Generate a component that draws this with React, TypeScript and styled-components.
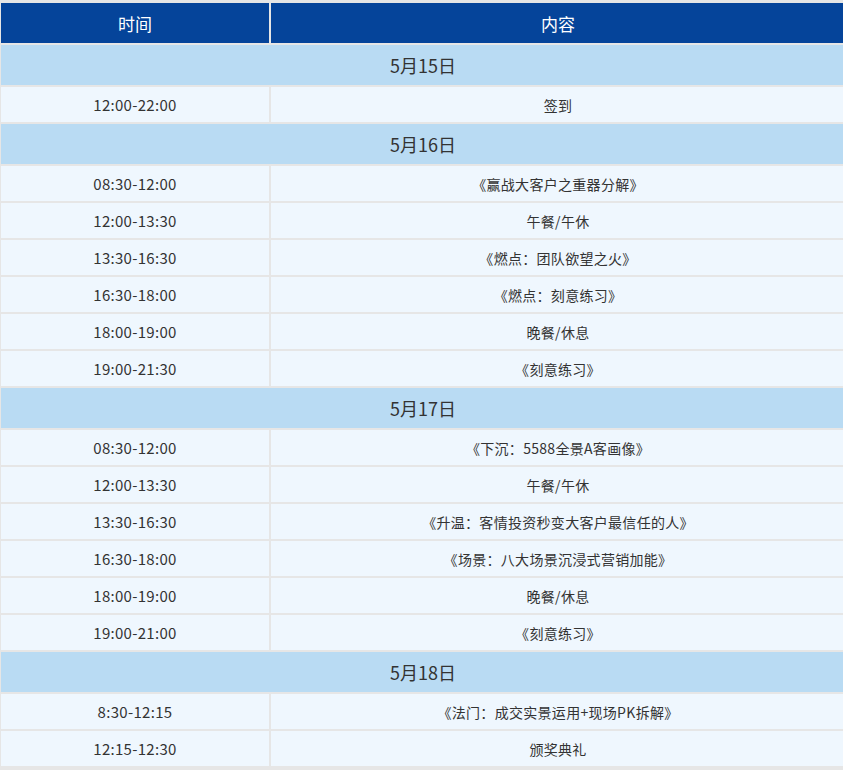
import React from "react";
import styled, { createGlobalStyle } from "styled-components";

const GlobalStyle = createGlobalStyle`
  html, body {
    margin: 0;
    padding: 0;
    background: #e6e6e6;
    overflow: hidden;
  }
  body {
    font-family: "Noto Sans CJK SC", "Noto Sans", sans-serif;
  }
`;

const Schedule = styled.table`
  width: 848px;
  margin: 1px 0 0 -1px;
  border-collapse: separate;
  border-spacing: 2px;
  background: #e6e6e6;
  table-layout: fixed;
`;

const HeadCell = styled.th<{ $w?: number }>`
  width: ${(p) => (p.$w ? `${p.$w}px` : "auto")};
  height: 40px;
  padding: 0;
  background: #05449a;
  color: #ffffff;
  font-size: 17px;
  font-weight: 400;
  text-align: center;
`;

const DateCell = styled.td`
  height: 40px;
  padding: 0;
  background: #b9dbf3;
  color: #333333;
  font-size: 18px;
  text-align: center;
`;

const Cell = styled.td<{ $time?: boolean }>`
  height: 35px;
  padding: 0;
  background: #eff7fe;
  color: #333333;
  font-size: ${(p) => (p.$time ? "15px" : "14px")};
  text-align: center;
  letter-spacing: 0.3px;
`;

const days = [
  {
    date: "5月15日",
    items: [["12:00-22:00", "签到"]],
  },
  {
    date: "5月16日",
    items: [
      ["08:30-12:00", "《赢战大客户之重器分解》"],
      ["12:00-13:30", "午餐/午休"],
      ["13:30-16:30", "《燃点：团队欲望之火》"],
      ["16:30-18:00", "《燃点：刻意练习》"],
      ["18:00-19:00", "晚餐/休息"],
      ["19:00-21:30", "《刻意练习》"],
    ],
  },
  {
    date: "5月17日",
    items: [
      ["08:30-12:00", "《下沉：5588全景A客画像》"],
      ["12:00-13:30", "午餐/午休"],
      ["13:30-16:30", "《升温：客情投资秒变大客户最信任的人》"],
      ["16:30-18:00", "《场景：八大场景沉浸式营销加能》"],
      ["18:00-19:00", "晚餐/休息"],
      ["19:00-21:00", "《刻意练习》"],
    ],
  },
  {
    date: "5月18日",
    items: [
      ["8:30-12:15", "《法门：成交实景运用+现场PK拆解》"],
      ["12:15-12:30", "颁奖典礼"],
    ],
  },
];

export default function App() {
  return (
    <>
      <GlobalStyle />
      <Schedule>
        <thead>
          <tr>
            <HeadCell $w={268}>时间</HeadCell>
            <HeadCell>内容</HeadCell>
          </tr>
        </thead>
        <tbody>
          {days.map((d) => (
            <React.Fragment key={d.date}>
              <tr>
                <DateCell colSpan={2}>{d.date}</DateCell>
              </tr>
              {d.items.map(([time, text], i) => (
                <tr key={d.date + i}>
                  <Cell $time>{time}</Cell>
                  <Cell>{text}</Cell>
                </tr>
              ))}
            </React.Fragment>
          ))}
        </tbody>
      </Schedule>
    </>
  );
}
